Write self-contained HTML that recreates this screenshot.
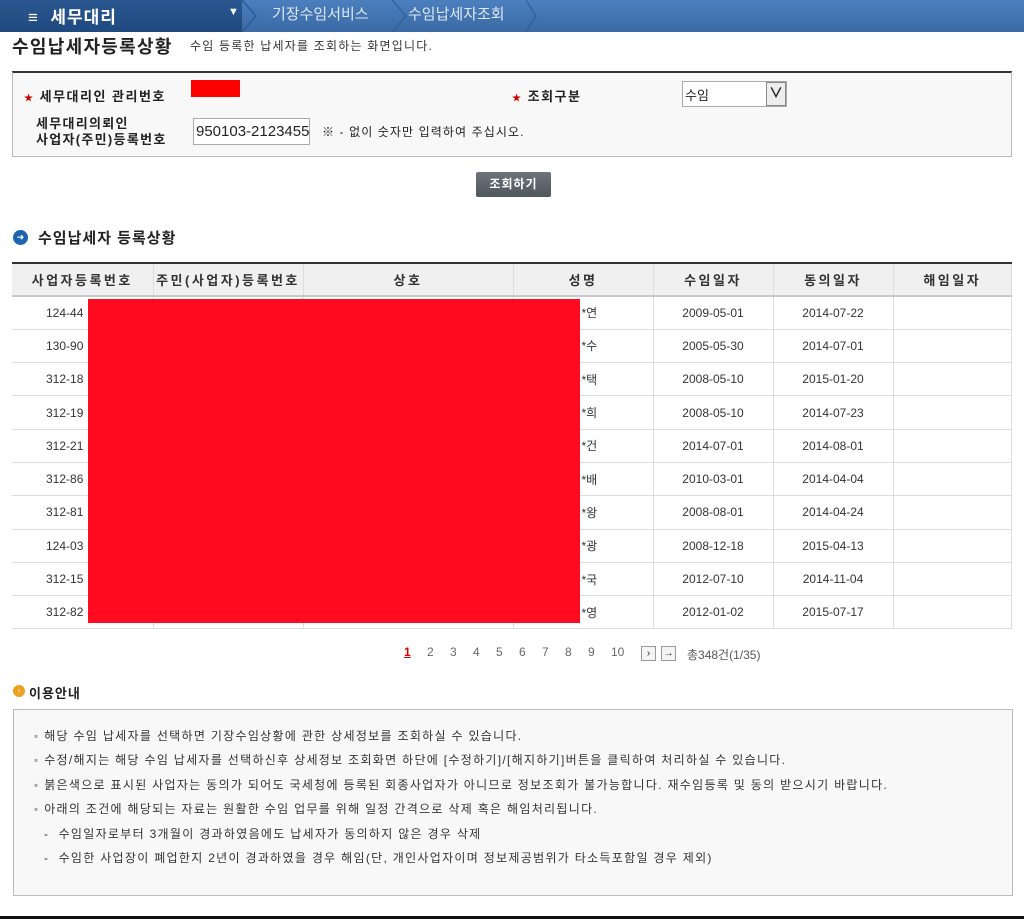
<!DOCTYPE html>
<html><head><meta charset="utf-8">
<style>
*{margin:0;padding:0;box-sizing:border-box}
body{width:1024px;height:919px;position:relative;background:#fff;font-family:"Liberation Sans","Noto Sans CJK KR","NanumGothic",sans-serif;color:#222;overflow:hidden;font-size:12px}
.a{position:absolute;white-space:nowrap}
.top{position:absolute;left:0;top:0;width:1024px;height:32px;background:linear-gradient(#4b7fbd,#3a6aa6)}
.topl{position:absolute;left:0;top:0;width:242px;height:32px;background:linear-gradient(#2a5790,#1f4a80)}
table{border-collapse:collapse;position:absolute;left:12px;top:262px;width:1000px}
th{height:33px;background:#f0f0f0;border-top:2px solid #333;border-bottom:2px solid #c8c8c8;border-left:1px solid #ddd;font-weight:bold;font-size:13px;color:#333;letter-spacing:2.5px}
td{height:33.3px;border-bottom:1px solid #ddd;border-left:1px solid #ddd;text-align:center;font-size:12px;color:#333}
tr td:first-child,tr th:first-child{border-left:none}
tr td:last-child,tr th:last-child{border-right:1px solid #ddd}
.pg{position:absolute;top:645px;font-size:12px;color:#666}
</style></head><body>
<div class="top"></div><div class="topl"></div>
<svg class="a" style="left:240px;top:0" width="300" height="32"><path d="M2 0 L16 16 L2 32" stroke="#2d5a94" fill="none" stroke-width="1.5"/><path d="M152 0 L166 16 L152 32" stroke="#2d5a94" fill="none"/><path d="M286 0 L296 16 L286 32" stroke="#2d5a94" fill="none"/></svg>
<div class="a" style="left:28px;top:3px;color:#fff;font-size:17px;font-weight:bold;letter-spacing:1px">≡ &nbsp;세무대리</div>
<div class="a" style="left:228px;top:6px;color:#fff;font-size:11px">▼</div>
<div class="a" style="left:272px;top:3px;color:#dfe8f4;font-size:15px">기장수임서비스</div>
<div class="a" style="left:408px;top:3px;color:#dfe8f4;font-size:15px">수임납세자조회</div>

<div class="a" style="left:12px;top:33px;font-size:18px;font-weight:bold;color:#222;letter-spacing:1.3px">수임납세자등록상황</div>
<div class="a" style="left:190px;top:37px;font-size:12px;color:#333;letter-spacing:1.2px">수임 등록한 납세자를 조회하는 화면입니다.</div>

<div class="a" style="left:12px;top:71px;width:1000px;height:86px;background:#f8f8f8;border:1px solid #bbb;border-top:2px solid #333"></div>
<div class="a" style="left:24px;top:86px;font-size:13px;font-weight:bold;letter-spacing:1.5px"><span style="color:#c00;font-size:9px">★</span> 세무대리인 관리번호</div>
<div class="a" style="left:191px;top:80px;width:49px;height:17px;background:#ff0000"></div>
<div class="a" style="left:512px;top:86px;font-size:13px;font-weight:bold;letter-spacing:1.5px"><span style="color:#c00;font-size:9px">★</span> 조회구분</div>
<div class="a" style="left:682px;top:81px;width:105px;height:26px;background:#fff;border:1px solid #aaa;font-size:13px;padding:3px 2px">수임</div>
<div class="a" style="left:766px;top:82px;width:20px;height:24px;background:#eee;border:1px solid #888;text-align:center;font-size:14px;font-weight:bold">∨</div>
<div class="a" style="left:36px;top:116px;font-size:13px;font-weight:bold;line-height:16px;letter-spacing:1.3px">세무대리의뢰인<br>사업자(주민)등록번호</div>
<div class="a" style="left:193px;top:118px;width:117px;height:27px;background:#fff;border:1px solid #aaa;font-size:15px;padding:4px 2px;color:#222">950103-2123455</div>
<div class="a" style="left:322px;top:123px;font-size:12px;letter-spacing:1.1px">※ - 없이 숫자만 입력하여 주십시오.</div>

<div class="a" style="left:476px;top:172px;width:75px;height:25px;background:linear-gradient(#6d747c,#4f565e);border-radius:2px;color:#fff;font-size:12px;font-weight:bold;text-align:center;line-height:25px;letter-spacing:1px">조회하기</div>

<div class="a" style="left:13px;top:230px;width:15px;height:15px;border-radius:50%;background:#1c64b0;color:#fff;font-size:9px;text-align:center;line-height:15px">➜</div>
<div class="a" style="left:38px;top:227px;font-size:15px;font-weight:bold;letter-spacing:1px">수임납세자 등록상황</div>

<table>
<tr><th style="width:141px">사업자등록번호</th><th style="width:150px">주민(사업자)등록번호</th><th style="width:210px">상호</th><th style="width:140px">성명</th><th style="width:120px">수임일자</th><th style="width:120px">동의일자</th><th>해임일자</th></tr>
<tr><td style="text-align:left;padding-left:34px">124-44</td><td></td><td></td><td style="text-align:left;padding-left:68px">*연</td><td>2009-05-01</td><td>2014-07-22</td><td></td></tr>
<tr><td style="text-align:left;padding-left:34px">130-90</td><td></td><td></td><td style="text-align:left;padding-left:68px">*수</td><td>2005-05-30</td><td>2014-07-01</td><td></td></tr>
<tr><td style="text-align:left;padding-left:34px">312-18</td><td></td><td></td><td style="text-align:left;padding-left:68px">*택</td><td>2008-05-10</td><td>2015-01-20</td><td></td></tr>
<tr><td style="text-align:left;padding-left:34px">312-19</td><td></td><td></td><td style="text-align:left;padding-left:68px">*희</td><td>2008-05-10</td><td>2014-07-23</td><td></td></tr>
<tr><td style="text-align:left;padding-left:34px">312-21</td><td></td><td></td><td style="text-align:left;padding-left:68px">*건</td><td>2014-07-01</td><td>2014-08-01</td><td></td></tr>
<tr><td style="text-align:left;padding-left:34px">312-86</td><td></td><td></td><td style="text-align:left;padding-left:68px">*배</td><td>2010-03-01</td><td>2014-04-04</td><td></td></tr>
<tr><td style="text-align:left;padding-left:34px">312-81</td><td></td><td></td><td style="text-align:left;padding-left:68px">*왕</td><td>2008-08-01</td><td>2014-04-24</td><td></td></tr>
<tr><td style="text-align:left;padding-left:34px">124-03</td><td></td><td></td><td style="text-align:left;padding-left:68px">*광</td><td>2008-12-18</td><td>2015-04-13</td><td></td></tr>
<tr><td style="text-align:left;padding-left:34px">312-15</td><td></td><td></td><td style="text-align:left;padding-left:68px">*국</td><td>2012-07-10</td><td>2014-11-04</td><td></td></tr>
<tr><td style="text-align:left;padding-left:34px">312-82</td><td></td><td></td><td style="text-align:left;padding-left:68px">*영</td><td>2012-01-02</td><td>2015-07-17</td><td></td></tr>
</table>
<div class="a" style="left:88px;top:299px;width:492px;height:324px;background:#ff0a1e"></div>

<div class="pg" style="left:404px;color:#d00;font-weight:bold;text-decoration:underline">1</div>
<div class="pg" style="left:427px">2</div>
<div class="pg" style="left:450px">3</div>
<div class="pg" style="left:473px">4</div>
<div class="pg" style="left:496px">5</div>
<div class="pg" style="left:519px">6</div>
<div class="pg" style="left:542px">7</div>
<div class="pg" style="left:565px">8</div>
<div class="pg" style="left:588px">9</div>
<div class="pg" style="left:611px">10</div>
<div class="a" style="left:641px;top:646px;width:15px;height:15px;border:1px solid #999;background:#f4f4f4;font-size:10px;text-align:center;line-height:13px">›</div>
<div class="a" style="left:661px;top:646px;width:15px;height:15px;border:1px solid #999;background:#f4f4f4;font-size:10px;text-align:center;line-height:13px">→</div>
<div class="a" style="left:687px;top:646px;font-size:12px;color:#555">총348건(1/35)</div>

<div class="a" style="left:13px;top:685px;width:12px;height:12px;border-radius:50%;background:#f0a020;color:#fff;font-size:8px;text-align:center;line-height:12px">›</div>
<div class="a" style="left:29px;top:683px;font-size:13px;font-weight:bold;letter-spacing:1px">이용안내</div>
<div class="a" style="left:13px;top:709px;width:1000px;height:187px;background:#f8f8f8;border:1px solid #bbb"></div>
<div class="a" style="left:34px;top:724px;font-size:12px;color:#333;line-height:24.3px;letter-spacing:1.3px">
<span style="color:#aaa">▪</span> 해당 수임 납세자를 선택하면 기장수임상황에 관한 상세정보를 조회하실 수 있습니다.<br>
<span style="color:#aaa">▪</span> 수정/해지는 해당 수임 납세자를 선택하신후 상세정보 조회화면 하단에 [수정하기]/[해지하기]버튼을 클릭하여 처리하실 수 있습니다.<br>
<span style="color:#aaa">▪</span> 붉은색으로 표시된 사업자는 동의가 되어도 국세청에 등록된 회종사업자가 아니므로 정보조회가 불가능합니다. 재수임등록 및 동의 받으시기 바랍니다.<br>
<span style="color:#aaa">▪</span> 아래의 조건에 해당되는 자료는 원활한 수임 업무를 위해 일정 간격으로 삭제 혹은 해임처리됩니다.</div>
<div class="a" style="left:44px;top:822px;font-size:12px;color:#333;line-height:24px;letter-spacing:1.3px">
-&nbsp; 수임일자로부터 3개월이 경과하였음에도 납세자가 동의하지 않은 경우 삭제<br>
-&nbsp; 수임한 사업장이 폐업한지 2년이 경과하였을 경우 해임(단, 개인사업자이며 정보제공범위가 타소득포함일 경우 제외)</div>
<div class="a" style="left:0;top:916px;width:1024px;height:3px;background:#111"></div>
</body></html>
